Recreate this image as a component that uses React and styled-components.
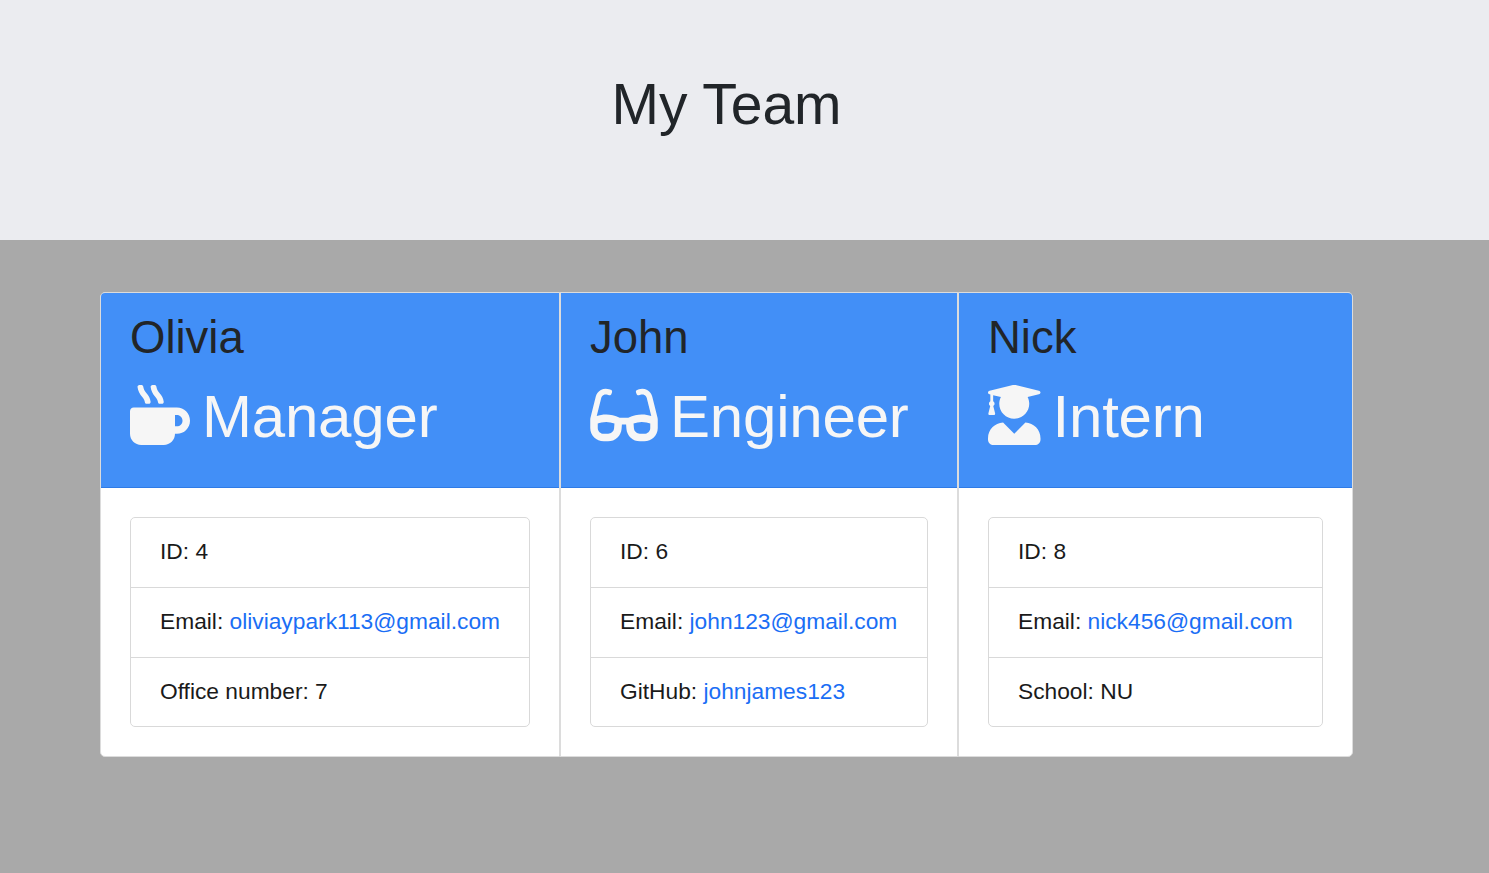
import React from 'react';
import styled, {createGlobalStyle} from 'styled-components';
import {FaMugHot, FaGlasses, FaUserGraduate} from 'react-icons/fa';

const GlobalStyle = createGlobalStyle`
  html, body {
    margin: 0;
    padding: 0;
    background: #a9a9a9;
    font-family: "Liberation Sans", Arial, sans-serif;
    color: #212529;
  }
`;

const Page = styled.div`
  min-height: 873px;
  background: #a9a9a9;
`;

const Hero = styled.header`
  height: 240px;
  background: #ebecf0;
  display: flex;
  justify-content: center;
  padding-top: 70px;
  box-sizing: border-box;
`;

const Title = styled.h1`
  margin: 0 0 0 -36px;
  font-size: 57px;
  line-height: 69px;
  font-weight: 400;
  color: #212529;
`;

const Deck = styled.main`
  display: flex;
  width: 1253px;
  margin-left: 100px;
  padding-top: 52px;
`;

const Card = styled.section`
  width: ${p => p.$width}px;
  box-sizing: border-box;
  height: 465px;
  background: #fff;
  border: 1px solid #dcdcdc;
  border-radius: ${p => p.$radius};
  overflow: hidden;
`;

const CardHead = styled.div`
  height: 195px;
  box-sizing: border-box;
  padding: 18px 29px 0;
  background: #428ff7;
  border-bottom: 1px solid #2f7be6;
`;

const Name = styled.h2`
  margin: 0;
  font-size: 45.5px;
  line-height: 53px;
  font-weight: 400;
  color: #212529;
`;

const Role = styled.h3`
  margin: 14px 0 0;
  display: flex;
  align-items: center;
  gap: ${p => p.$gap}px;
  font-size: 60px;
  line-height: 69px;
  font-weight: 400;
  color: #f6f6f6;
  letter-spacing: -0.2px;
  svg {
    display: block;
    flex: none;
    width: ${p => p.$iconWidth}px;
    height: 60px;
  }
`;

const RoleText = styled.span`
  padding-top: 4px;
`;

const CardBody = styled.div`
  padding: 29px;
`;

const List = styled.ul`
  margin: 0;
  padding: 0;
  list-style: none;
  border: 1px solid #d9d9d9;
  border-radius: 5px;
`;

const Item = styled.li`
  height: 70px;
  box-sizing: border-box;
  padding: 0 29px 2px;
  display: flex;
  align-items: center;
  white-space: pre;
  font-size: 22.75px;
  color: #1a1a1a;
  & + & {
    border-top: 1px solid #d9d9d9;
  }
  &:first-child {
    height: 69px;
  }
  &:last-child {
    height: 69px;
  }
`;

const MailLink = styled.a`
  color: #1a6ef5;
  text-decoration: none;
`;

const team = [
  {
    name: 'Olivia', role: 'Manager', Icon: FaMugHot, iconWidth: 60, gap: 12, width: 460, radius: '5px 0 0 5px',
    id: 4, email: 'oliviaypark113@gmail.com', label: 'Office number: ', extra: '7',
  },
  {
    name: 'John', role: 'Engineer', Icon: FaGlasses, iconWidth: 68, gap: 12, width: 398, radius: '0',
    id: 6, email: 'john123@gmail.com', label: 'GitHub: ', extra: 'johnjames123', extraLink: true,
  },
  {
    name: 'Nick', role: 'Intern', Icon: FaUserGraduate, iconWidth: 52.5, gap: 12, width: 395, radius: '0 5px 5px 0',
    id: 8, email: 'nick456@gmail.com', label: 'School: ', extra: 'NU',
  },
];

export default function App() {
  return (
    <Page>
      <GlobalStyle/>
      <Hero>
        <Title>My Team</Title>
      </Hero>
      <Deck>
        {team.map(m => (
          <Card key={m.name} $width={m.width} $radius={m.radius}>
            <CardHead>
              <Name>{m.name}</Name>
              <Role $gap={m.gap} $iconWidth={m.iconWidth}>
                <m.Icon/>
                <RoleText>{m.role}</RoleText>
              </Role>
            </CardHead>
            <CardBody>
              <List>
                <Item>ID: {m.id}</Item>
                <Item>Email: <MailLink href="#">{m.email}</MailLink></Item>
                <Item>
                  {m.label}
                  {m.extraLink ? <MailLink href="#">{m.extra}</MailLink> : m.extra}
                </Item>
              </List>
            </CardBody>
          </Card>
        ))}
      </Deck>
    </Page>
  );
}
